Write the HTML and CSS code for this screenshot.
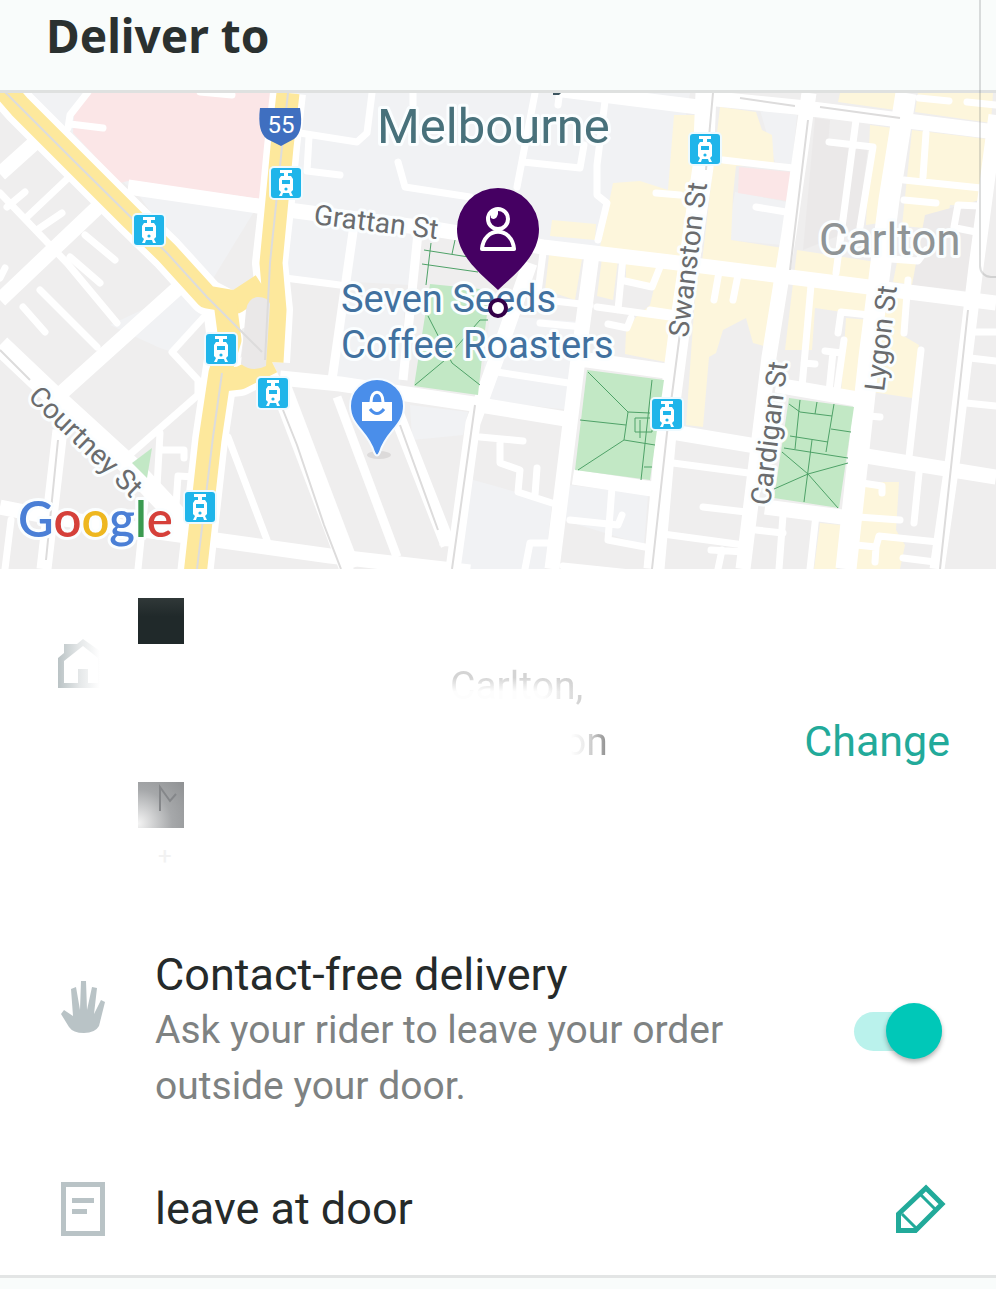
FILE: index.html
```
<!DOCTYPE html>
<html lang="en">
<head>
    <meta charset="UTF-8">
    <meta name="viewport" content="width=device-width, initial-scale=1.0">
    <title>Deliver to</title>
    <link rel="stylesheet" href="styles.css">
</head>

<body>
    <header class="header">
        <h1>Deliver to</h1>
    </header>
    <div class="side-panel"></div>

    <!-- map -->
    <svg class="map" viewBox="0 93 996 476" role="img" aria-label="Map of the delivery address">
        <defs>
            <symbol id="tram" viewBox="0 0 34 34">
                <rect width="34" height="34" rx="5" fill="#eefaff"/>
                <rect x="2" y="2" width="30" height="30" rx="3" fill="#1fb5ea"/>
                <path fill="#fff" d="M11 4h12v3h-4v3h3l2 3v11l-2 2 2 4h-3l-1-3h-6l-1 3h-3l2-4-2-2V13l2-3h3V7h-4z"/>
                <path fill="#1fb5ea" d="M13 14h8v4h-8z"/>
                <circle cx="17" cy="23" r="1.6" fill="#1fb5ea"/>
            </symbol>
        </defs>

        <rect y="93" width="996" height="476" fill="#efeeee"/>

        <!-- campus blocks -->
        <g fill="#f1f2f4">
            <path d="M25 93H690L660 262 258 205 206 290 140 197z"/>
            <path d="M290 205 420 225 410 285 285 278z"/>
            <path d="M110 325 180 292 205 318 172 352 160 348z"/>
            <path d="M340 300 405 300 400 385 335 380zM410 405 468 412 463 435 412 440z"/>
            <path d="M490 315 582 322 570 410 480 400z"/>
            <path d="M466 478 552 502 545 569 458 569zM570 485 648 495 644 545 563 520z"/>
            <path d="M760 110 797 115 792 165 775 162zM735 192 787 202 783 245 727 240z"/>
        </g>
        <path d="M815 118 830 120 828 145 868 147 858 228 803 250z" fill="#ebe9e9"/>

        <!-- commercial blocks -->
        <g fill="#fdf6dc">
            <path d="M613 183 640 181 668 190 674 115 697 115 685 260 600 247z"/>
            <path d="M552 220 596 224 595 240 550 236z"/>
            <path d="M720 107 756 112 762 130 772 135 774 164 736 166 733 195 731 240 783 248 780 270 702 262z"/>
            <path d="M549 255 582 259 575 300 545 290zM602 258 618 260 613 300 597 296z"/>
            <path d="M626 260 690 268 670 363 625 354 626 332 636 317 650 305 654 288 626 280z"/>
            <path d="M697 268 776 277 768 347 753 343 746 318 723 330 716 353 709 357 703 427 686 425z"/>
            <path d="M797 250 876 262 870 315 842 312 815 308 812 350 785 350z"/>
            <path d="M870 125 893 128 886 222 866 225z"/>
            <path d="M846 318 870 320 862 395 841 395z"/>
            <path d="M840 93 897 93 895 110 838 102zM918 93 993 93 991 123 915 112z"/>
            <path d="M912 130 987 139 980 206 950 205 946 230 902 226z"/>
            <path d="M897 262 918 264 913 285 893 282zM882 285 905 290 902 335 919 345 912 398 872 392z"/>
            <path d="M863 482 899 482 896 530 905 545 900 569 852 569zM820 523 841 525 837 569 814 569z"/>
        </g>
        <g fill="#fbe6e7">
            <path d="M90 93H274L261 199 128 181 120 183 73 133 74 115z"/>
            <path d="M739 167 791 172 787 201 738 193z"/>
        </g>
        <path d="M925 215 980 200 976 292 912 285z" fill="#eceaea"/>

        <!-- small streets -->
        <g class="road small">
            <path d="M7 207 25 192M37 230 62 213M85 235 115 260M70 257 100 283M23 307 45 332M0 278 5 268"/>
            <path d="M0 193 67 263 117 323M40 290 97 347M27 217 66 180M88 92 70 115 68 128M70 124 103 128"/>
            <path d="M203 318 172 352 198 380 198 395 127 457M160 433 157 487M163 450H184V458M176 505 178 476 195 477"/>
            <path d="M228 437 267 540M11 520 5 569M145 500 138 569M228 93 210 93M200 92 232 95"/>
            <path d="M300 133 357 142 367 133 372 93M309 137 307 171 340 175M285 278 340 285"/>
            <path d="M398 162 405 187 470 197M535 93 517 187M523 162 580 168 584 145M606 93 597 165 597 195 607 203 598 240M560 90 558 105M413 93V105"/>
            <path d="M330 503 350 569M480 437 523 441M500 440 500 463 520 470 518 492 552 503M537 468 535 495M525 569 530 543 550 543"/>
            <path d="M497 372 575 384M543 253 537 300M540 323 583 327M545 300 590 305M623 257 618 310M597 307 670 317M625 281 652 287 660 267M608 324 627 328 631 318"/>
            <path d="M570 520 618 525 622 515M612 487 608 540 645 547M563 566 640 574"/>
            <path d="M723 160 793 168M756 207 786 212M656 193 680 195M856 120 836 273M829 142 873 147 860 227M719 272 714 300M738 275 733 300M670 313 650 310"/>
            <path d="M926 133 923 177M904 180 981 188M904 200 936 203M954 227 958 205 979 206M956 228 976 232M891 259 918 261 926 250M919 98 949 101M967 102 996 105"/>
            <path d="M811 285 802 387M804 363 815 364M838 333 841 312 869 315M844 340 836 397M825 351 842 353M833 352 829 392M908 280 904 333M921 350 909 457M869 416 880 417"/>
            <path d="M673 463 756 474M703 507 746 512M663 534 744 545M711 550 745 552M722 550 718 569M756 530 783 533M783 515 779 569M816 515 810 569"/>
            <path d="M919 473 914 523M862 483 882 486 882 493M858 517 900 520M856 545 876 547 879 536 938 542M875 562 876 547M903 558 935 562M972 332H996M970 358 996 361M966 403 996 406"/>
        </g>

        <!-- main streets -->
        <g class="road">
            <path d="M40 138 0 174M98 207 0 300M178 288 57 397M60 430 44 569M0 507 50 517 330 556 470 572"/>
            <path d="M128 187 258 206 440 230 543 247 670 262 790 277 996 303"/>
            <path d="M280 378 340 384 480 405 572 420M660 430 756 446M563 90 706 108"/>
            <path d="M593 247 577 367 552 569M530 263 497 357 473 423 453 569M573 358 680 373M573 477 665 491"/>
            <path d="M706 98 796 107 996 132M809 93 789 233 769 357 743 569M776 385 863 400M765 507 850 518M860 455 996 477"/>
            <path d="M996 115 976 267 953 457 937 569M397 415 448 545M440 538 460 540"/>
        </g>
        <path class="road mid" d="M354 225 332 380M418 233 403 380M337 397 397 557"/>
        <g class="road wide">
            <path d="M0 345 60 402 130 466 190 530M706 93 703 167 679 333 666 433 654 569M906 93 889 200 869 357 846 569"/>
            <path d="M280 385 350 569"/>
        </g>

        <!-- parks -->
        <g fill="#c2e8c5">
            <path d="M430 284 490 290 485 330 478 395 414 386z"/>
            <path d="M587 370 664 380 650 480 575 470z"/>
            <path d="M789 398 854 407 839 508 774 498z"/>
            <path d="M152 448 132 463 147 478z"/>
        </g>
        <g class="paths">
            <path d="M424 250 475 258M422 264 478 272M455 240 452 254M431 243 426 285M428 316 452 363 480 385M488 320H480L445 360 415 385"/>
            <path d="M588 372 628 412 650 413M580 420 626 425M578 470 624 440 655 445M628 412 624 440M635 418H652V432H635zM652 380 641 480M640 420V438M644 467H652"/>
            <path d="M789 404 800 412 832 416M800 400 795 449M834 404 826 452M817 402 815 414M831 429 851 432M784 448 848 458M790 436 828 442M812 440 804 502M782 452 808 474 838 508M774 489 808 474 848 463"/>
        </g>

        <!-- tram lines -->
        <g class="tram-line">
            <path d="M713 93 706 170M680 333 667 433 652 569M283 410 297 445 324 525 341 569"/>
            <path d="M0 350 30 380M58 440 46 560M475 405 452 569M400 425 438 530M968 310 940 569M808 120 790 270M740 98 795 106M820 107 900 118"/>
        </g>

        <!-- highway -->
        <g class="highway-edge">
            <path d="M0 84 20 107 73 160 130 217 167 253 207 297 236 312 268 290M288 93 282 147 277 200 270 263 275 310 272 362M272 362 240 378 222 380"/>
            <path d="M220 300 225 340 220 373 210 440 195 575"/>
        </g>
        <g class="highway">
            <path d="M0 84 20 107 73 160 130 217 167 253 207 297 236 302 262 285M288 93 282 147 277 200 271 263 275 310 272 362M272 362 240 378 222 380"/>
            <path d="M225 302 230 340 220 373 210 440 195 575"/>
        </g>
        <path d="M246 310Q248 298 258 297 268 297 270 304L266 366Q252 373 241 364z" fill="#eae8e8"/>
        <path class="tram-line" d="M0 87 20 107 73 160 167 253 207 297 262 352M288 93 282 147 270 263 265 360M222 373 213 437 197 569"/>

        <!-- route shield -->
        <path d="M260 108H300Q304 132 294 139L281 146 267 139Q257 132 260 108z" fill="#3f6fc0"/>
        <text class="shield-label" x="281" y="133">55</text>

        <use href="#tram" x="269" y="166" width="34" height="34"/>
        <use href="#tram" x="132" y="213" width="34" height="34"/>
        <use href="#tram" x="204" y="332" width="34" height="34"/>
        <use href="#tram" x="256" y="376" width="34" height="34"/>
        <use href="#tram" x="183" y="490" width="34" height="34"/>
        <use href="#tram" x="688" y="132" width="34" height="34"/>
        <use href="#tram" x="650" y="397" width="34" height="34"/>

        <!-- labels -->
        <path d="M553 93h8l-2 2h-6z" fill="#3d5560"/>
        <text class="label city" x="377" y="143">Melbourne</text>
        <text class="label suburb" x="819" y="255">Carlton</text>
        <text class="label place" x="341" y="312">Seven Seeds</text>
        <text class="label place" x="341" y="358">Coffee Roasters</text>
        <text class="label street" transform="translate(313 224) rotate(7)">Grattan St</text>
        <text class="label street" transform="translate(688 338) rotate(-83)">Swanston St</text>
        <text class="label street" transform="translate(770 506) rotate(-83)">Cardigan St</text>
        <text class="label street" transform="translate(884 392) rotate(-83)">Lygon St</text>
        <text class="label street" transform="translate(27 398) rotate(44)">Courtney St</text>
        <text class="label logo" x="18" y="537"><tspan fill="#4a7fd6">G</tspan><tspan fill="#d5403a">o</tspan><tspan fill="#eeb720">o</tspan><tspan fill="#4a7fd6">g</tspan><tspan fill="#3a9a50">l</tspan><tspan fill="#d5403a">e</tspan></text>

        <!-- shop pin -->
        <ellipse cx="379" cy="455" rx="12" ry="4" fill="#dcdada"/>
        <path d="M377 379a27 27 0 0 1 27 27c0 20-18 25-24 46q-3 7-6 0c-6-21-24-26-24-46a27 27 0 0 1 27-27z" fill="#4a8eea" stroke="#f6fbff" stroke-width="2"/>
        <path d="M362 402h30v19h-30z" fill="#fff"/>
        <path d="M371 402c0-13 12-13 12 0" fill="none" stroke="#fff" stroke-width="3"/>
        <path d="M370 409q7 9 14 0" fill="none" stroke="#4a8eea" stroke-width="3"/>

        <!-- customer pin -->
        <path d="M498 188a41 41 0 0 1 41 41c0 27-24 45-41 61-17-16-41-34-41-61a41 41 0 0 1 41-41z" fill="#450062"/>
        <circle cx="498" cy="219" r="10" fill="none" stroke="#fff" stroke-width="4"/>
        <path d="M491 218q5 3 7-4v-5l-7 3z" fill="#fff"/>
        <path d="M482 249c2-23 30-23 32 0z" fill="none" stroke="#fff" stroke-width="4" stroke-linejoin="round"/>
        <circle cx="498" cy="308" r="8" fill="#fff" stroke="#330048" stroke-width="4"/>
    </svg>

    <main class="card">
        <section class="row address-row">
            <svg class="icon home-icon" viewBox="0 0 48 52">
                <defs>
                    <linearGradient id="fade">
                        <stop offset="0" stop-color="#bac3c5"/>
                        <stop offset="0.5" stop-color="#e4e7e8"/>
                        <stop offset="1" stop-color="#fff"/>
                    </linearGradient>
                </defs>
                <path fill="url(#fade)" fill-rule="evenodd" d="M0 20 6 15V6H19L25 1 42 13V50H0zM6 23V45H20V31H30V45H40V20L25 8z"/>
            </svg>
            <div class="address">
                <div class="block block-dark"></div>
                <p class="address-line suburb-line">Carlton,</p>
                <p class="address-line city-line">on</p>
                <div class="block block-grey">
                    <svg viewBox="0 0 46 46"><path d="M22 29V5L32 19 38 12"/></svg>
                </div>
                <p class="plus">+</p>
            </div>
            <a class="change" href="#">Change</a>
        </section>

        <section class="row contact-row">
            <svg class="icon hand-icon" viewBox="0 0 48 54">
                <path fill="#b9c3c6" d="M3 34 6 30 15 36 13 9 18 7 22 30 23 1H28L29 30 34 7 39 8 36 34 43 20 47 22 41 46Q37 53 26 53 15 53 11 47z"/>
            </svg>
            <label class="text" for="contact-free">
                <span class="title">Contact-free delivery</span>
                <span class="hint">Ask your rider to leave your order outside your door.</span>
            </label>
            <input type="checkbox" class="switch" id="contact-free" checked>
        </section>

        <section class="row note-row">
            <svg class="icon note-icon" viewBox="0 0 48 56">
                <path d="M5.500 3.500H44.500V52.500H5.500z" fill="none" stroke="#b9c3c6" stroke-width="5"/>
                <path d="M14 17H36V22H14zM14 28H29V33H14z" fill="#b9c3c6"/>
            </svg>
            <p class="text title">leave at door</p>
            <button class="edit" aria-label="Edit note">
                <svg viewBox="0 0 50 50" fill="none" stroke="#22aa9a">
                    <path stroke-width="5" d="M2.500 46.500V30L30 4 46 20 19.500 46.500z"/>
                    <path stroke-width="3" d="M6 30 20 44M25 11 39 25"/>
                </svg>
            </button>
        </section>
    </main>
</body>
</html>
```
FILE: styles.css
```
body {
    font-family: Roboto, "Liberation Sans", sans-serif;
    background-color: #f9fcfb;
    color: #252a2a;
    margin: 0;
    position: relative;
}

h1,
p {
    margin: 0;
}

.header {
    padding: 2px 46px 22px;
    border-bottom: 3px solid #dfe1e0;
}

.header h1 {
    font-family: "Noto Sans", sans-serif;
    font-size: 46px;
    line-height: 66px;
    font-weight: 700;
    color: #2b3130;
}

/* edge of the neighbouring panel */
.side-panel {
    position: absolute;
    top: 0;
    right: 0;
    width: 15px;
    height: 276px;
    border-left: 2px solid rgba(120, 125, 125, 0.25);
    border-bottom: 2px solid rgba(120, 125, 125, 0.25);
    border-bottom-left-radius: 12px;
}

/* map */
.map {
    display: block;
    width: 100%;
}

.road {
    fill: none;
    stroke: #fff;
    stroke-width: 15px;
    stroke-linejoin: round;
}

.small {
    stroke-width: 7px;
    stroke-linecap: round;
}

.mid {
    stroke-width: 9px;
}

.wide {
    stroke-width: 21px;
}

.highway-edge {
    fill: none;
    stroke: #fff;
    stroke-width: 36px;
    stroke-linejoin: round;
}

.highway {
    fill: none;
    stroke: #fde89c;
    stroke-width: 23px;
    stroke-linejoin: round;
}

.tram-line {
    fill: none;
    stroke: #dddcdc;
    stroke-width: 2px;
}

.paths {
    fill: none;
    stroke: #4fa268;
    stroke-width: 1px;
}

.label {
    stroke: #fbfeff;
    stroke-width: 6px;
    stroke-linejoin: round;
    paint-order: stroke;
}

.city {
    font-size: 49px;
    fill: #48717b;
}

.suburb {
    font-size: 44px;
    fill: #8f9496;
}

.place {
    font-size: 38px;
    fill: #41719f;
}

.street {
    font-size: 28px;
    fill: #6a6c6e;
}

.logo {
    font-family: Lato, sans-serif;
    font-size: 49px;
    font-weight: 600;
}

.shield-label {
    font-size: 24px;
    fill: #fff;
    text-anchor: middle;
}

/* delivery details */
.card {
    background-color: #fff;
    border-bottom: 3px solid #e3e5e5;
    padding-bottom: 38px;
}

.row {
    display: flex;
    padding: 0 46px 0 58px;
}

.icon {
    flex: none;
    width: 48px;
}

.address-row {
    padding-top: 29px;
}

.home-icon {
    height: 52px;
    margin-top: 40px;
}

.address {
    flex: 1;
    margin-left: 32px;
}

.block {
    width: 46px;
    height: 46px;
}

.block-dark {
    background: linear-gradient(#303838, #20292a 40%);
}

.block-grey {
    background: radial-gradient(circle at 0 90%, #f4f4f4, #a6a8aa 55%, #8f9193);
    margin-top: 12px;
}

.block-grey svg {
    display: block;
    fill: none;
    stroke: #85878a;
    stroke-width: 2px;
}

.address-line {
    font-size: 39px;
    line-height: 56px;
    color: transparent;
    background-clip: text;
    -webkit-background-clip: text;
    width: fit-content;
}

.suburb-line {
    margin: 14px 0 0 312px;
    background-image: linear-gradient(175deg, #d8d8d8 35%, #fdfdfd 60%);
    background-image: linear-gradient(90deg, transparent 70%, #cfcfcf), linear-gradient(#d4d4d4 35%, #fdfdfd 60%);
}

.city-line {
    margin-left: 426px;
    background-image: linear-gradient(90deg, #fff 15%, #ececec 45%, #8a8a8a);
}

.plus {
    font-size: 24px;
    line-height: 56px;
    padding-left: 20px;
    color: #f2f2f2;
}

.change {
    align-self: center;
    font-size: 43px;
    line-height: 56px;
    color: #22aa9a;
    text-decoration: none;
}

.contact-row {
    align-items: center;
    padding-top: 64px;
}

.hand-icon {
    align-self: flex-start;
    height: 54px;
    margin-top: 32px;
}

.text {
    flex: 1;
    margin-left: 49px;
}

.title,
.hint {
    display: block;
}

.title {
    font-size: 45px;
    line-height: 54px;
}

.hint {
    font-size: 39px;
    line-height: 56px;
    color: #7e8282;
    max-width: 620px;
}

.switch {
    appearance: none;
    display: flex;
    align-items: center;
    flex: none;
    width: 88px;
    height: 56px;
    margin: 0 8px 0 0;
    position: relative;
}

.switch::before {
    content: "";
    flex: 1;
    height: 39px;
    border-radius: 20px;
    background-color: #dcdfdf;
}

.switch::after {
    content: "";
    position: absolute;
    left: 0;
    width: 56px;
    height: 56px;
    border-radius: 50%;
    background-color: #fff;
    box-shadow: 0 3px 5px rgba(0, 0, 0, 0.3);
}

.switch:checked::before {
    background-color: #baf2ec;
}

.switch:checked::after {
    left: auto;
    right: 0;
    background-color: #00c8b8;
}

.note-row {
    align-items: center;
    padding-top: 67px;
}

.note-icon {
    height: 56px;
}

.edit {
    width: 50px;
    height: 50px;
    margin-right: 4px;
    padding: 0;
    border: none;
    background: none;
}

.edit svg {
    display: block;
}
```
